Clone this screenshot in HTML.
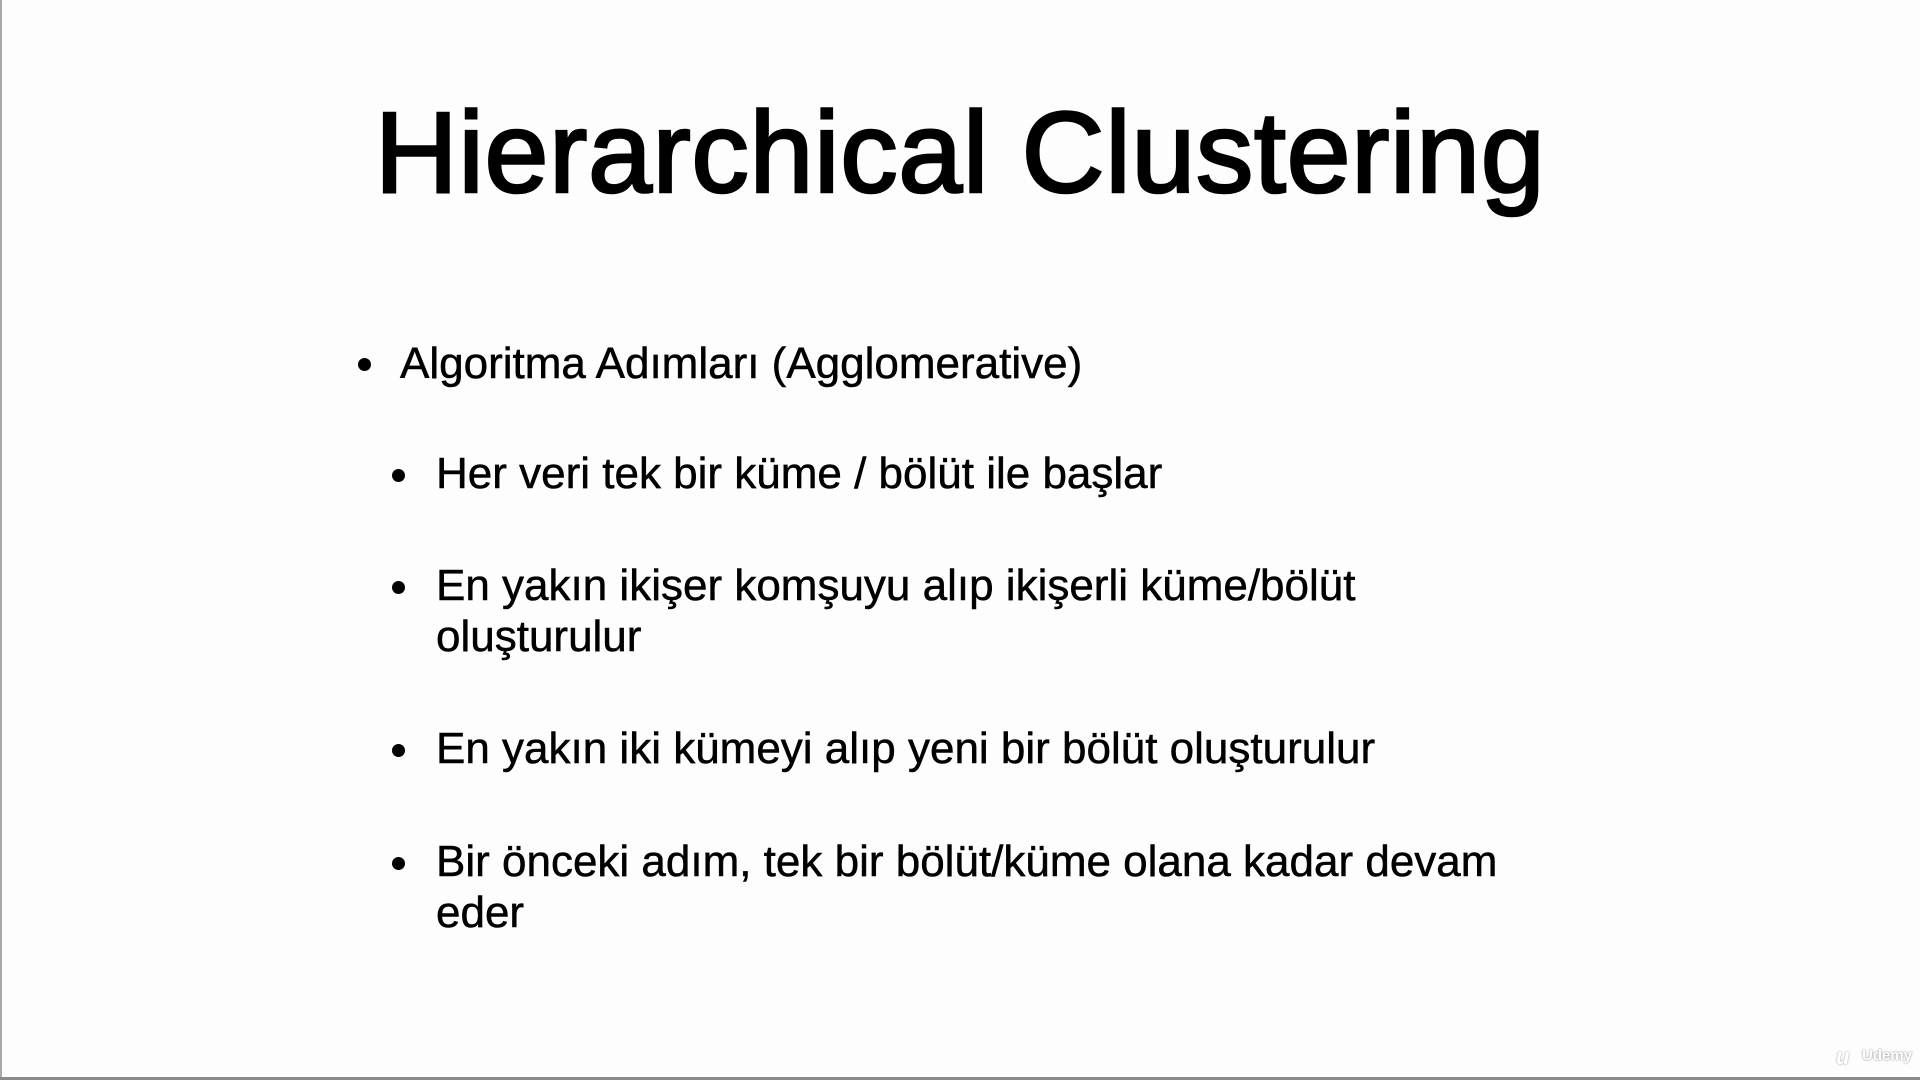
<!DOCTYPE html>
<html><head><meta charset="utf-8"><style>
html,body{margin:0;padding:0}
body{width:1920px;height:1080px;background:#fdfdfd;position:relative;overflow:hidden;font-family:"Liberation Sans",Arial,sans-serif;color:#000}
.l{position:absolute;left:0;top:0;width:2px;height:1080px;background:#a8a8a8}
.b{position:absolute;left:0;bottom:0;width:1920px;height:3px;background:#8a8a8a}
.t{position:absolute;left:0;width:1920px;text-align:center;top:96px;font-size:115px;line-height:1;letter-spacing:0.6px;-webkit-text-stroke:2.6px #000}
.x{position:absolute;font-size:44px;line-height:51px;white-space:nowrap;-webkit-text-stroke:0.5px #000}
.d{position:absolute;width:13px;height:13px;border-radius:50%;background:#000}
.logo{position:absolute;left:1862px;top:1047px;color:#fff;font-size:15px;font-weight:bold;text-shadow:0 0 2px #999,0 0 1px #aaa}
.lg{position:absolute;left:1836px;top:1044px;color:#fff;font-size:22px;font-weight:bold;font-style:italic;text-shadow:0 0 2px #999}
</style></head><body>
<div class="l"></div><div class="b"></div>
<div class="t">Hierarchical Clustering</div>
<div class="d" style="left:358px;top:358px"></div>
<div class="x" style="left:400px;top:338px">Algoritma Adımları (Agglomerative)</div>
<div class="d" style="left:392px;top:469px"></div>
<div class="x" style="left:436px;top:448px">Her veri tek bir küme / bölüt ile başlar</div>
<div class="d" style="left:392px;top:581px"></div>
<div class="x" style="left:436px;top:560px">En yakın ikişer komşuyu alıp ikişerli küme/bölüt<br>oluşturulur</div>
<div class="d" style="left:392px;top:744px"></div>
<div class="x" style="left:436px;top:723px">En yakın iki kümeyi alıp yeni bir bölüt oluşturulur</div>
<div class="d" style="left:392px;top:857px"></div>
<div class="x" style="left:436px;top:836px">Bir önceki adım, tek bir bölüt/küme olana kadar devam<br>eder</div>
<div class="lg">u</div>
<div class="logo">Udemy</div>
</body></html>
